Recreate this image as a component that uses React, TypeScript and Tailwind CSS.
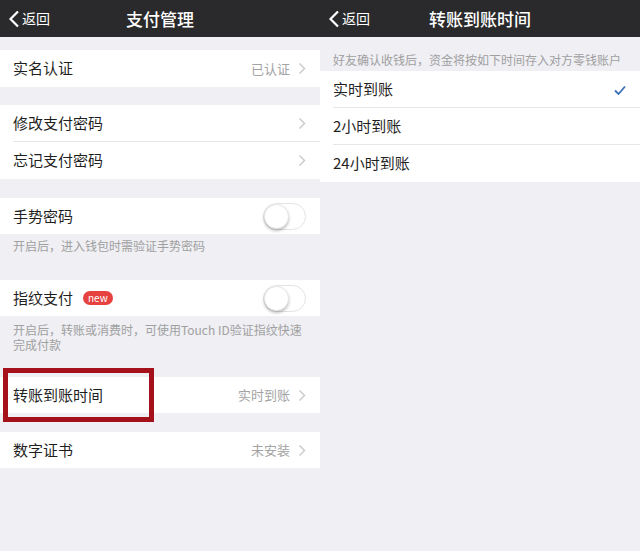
import React from 'react';

const font = { fontFamily: '"Noto Sans CJK SC", "Noto Sans", sans-serif' };

const Chevron = () => (
  <svg width="8" height="13" viewBox="0 0 8 13" className="ml-[8px] shrink-0">
    <polyline points="1.5,1.5 6.5,6.5 1.5,11.5" fill="none" stroke="#c7c7cc" strokeWidth="1.4" />
  </svg>
);

const Toggle = () => (
  <div className="relative w-[43px] h-[27px] rounded-full border border-[#e3e3e6] bg-white">
    <div className="absolute left-0 top-0 w-[25px] h-[25px] rounded-full bg-white shadow-[0_2px_3px_rgba(0,0,0,0.25)] border border-[#e6e6e6]" />
  </div>
);

const NavBar = ({ title }: { title: string }) => (
  <div className="relative h-[37px] bg-[#2a2a2c] flex items-center text-white">
    <div className="flex items-center pl-[8px]">
      <svg width="12" height="18" viewBox="0 0 12 18">
        <polyline points="10,1.5 2.5,9 10,16.5" fill="none" stroke="#ffffff" strokeWidth="2.2" />
      </svg>
      <span className="ml-[2px] text-[14px]">返回</span>
    </div>
    <div className="absolute inset-0 flex items-center justify-center text-[17px] font-medium pointer-events-none">
      {title}
    </div>
  </div>
);

type RowProps = { label: React.ReactNode; value?: string; arrow?: boolean; toggle?: boolean; divider?: boolean; tall?: boolean };

const Row = ({ label, value, arrow, toggle, divider, tall }: RowProps) => (
  <div className={`relative ${tall ? 'h-[37px]' : 'h-[36px]'} flex items-center pl-[13px] pr-[14px] bg-white`}>
    <div className="flex-1 flex items-center text-[15px] text-[#1f1f1f]">{label}</div>
    {value && <span className="text-[13px] text-[#a3a3a3]">{value}</span>}
    {arrow && <Chevron />}
    {toggle && <Toggle />}
    {divider && <div className="absolute left-[13px] right-0 bottom-0 h-px bg-[#e6e6e9]" />}
  </div>
);

const LeftPanel = () => (
  <div className="relative w-[320px] h-full bg-[#efeff4]">
    <NavBar title="支付管理" />
    <div className="h-[13px]" />
    <Row label="实名认证" value="已认证" arrow tall />
    <div className="h-[18px]" />
    <Row label="修改支付密码" arrow divider tall />
    <Row label="忘记支付密码" arrow tall />
    <div className="h-[19px]" />
    <Row label="手势密码" toggle />
    <div className="h-[46px] px-[13px] pt-[4px] text-[12px] leading-[16px] text-[#a0a0a0]">
      开启后，进入钱包时需验证手势密码
    </div>
    <Row
      label={
        <>
          指纹支付
          <span className="ml-[10px] h-[14px] px-[5px] rounded-full bg-[#e64340] text-white text-[10px] leading-[14px]">new</span>
        </>
      }
      toggle
    />
    <div className="h-[61px] px-[13px] pt-[6px] text-[12px] leading-[15px] text-[#a0a0a0]">
      <div>开启后，转账或消费时，可使用Touch ID验证指纹快速</div>
      <div>完成付款</div>
    </div>
    <Row label="转账到账时间" value="实时到账" arrow />
    <div className="h-[19px]" />
    <Row label="数字证书" value="未安装" arrow />
    <div className="absolute left-[3px] top-[368px] w-[151px] h-[54px] border-[5px] border-[#a5111a]" />
  </div>
);

const Option = ({ label, checked, divider }: { label: string; checked?: boolean; divider?: boolean }) => (
  <div className="relative h-[37px] flex items-center pl-[13px] pr-[14px] bg-white">
    <span className="flex-1 text-[15px] text-[#1f1f1f]">{label}</span>
    {checked && (
      <svg width="12" height="10" viewBox="0 0 12 10">
        <polyline points="1,5.5 4.5,9 11,1.5" fill="none" stroke="#3d71b8" strokeWidth="1.8" />
      </svg>
    )}
    {divider && <div className="absolute left-[13px] right-0 bottom-0 h-px bg-[#e6e6e9]" />}
  </div>
);

const RightPanel = () => (
  <div className="w-[320px] h-full bg-[#efeff4]">
    <NavBar title="转账到账时间" />
    <div className="h-[34px] px-[13px] flex items-center pt-[12px] text-[12px] text-[#a0a0a0]">
      好友确认收钱后，资金将按如下时间存入对方零钱账户
    </div>
    <Option label="实时到账" checked divider />
    <Option label="2小时到账" divider />
    <Option label="24小时到账" />
  </div>
);

export default function App() {
  return (
    <div className="w-[640px] h-[551px] flex overflow-hidden bg-[#efeff4]" style={font}>
      <LeftPanel />
      <RightPanel />
    </div>
  );
}
